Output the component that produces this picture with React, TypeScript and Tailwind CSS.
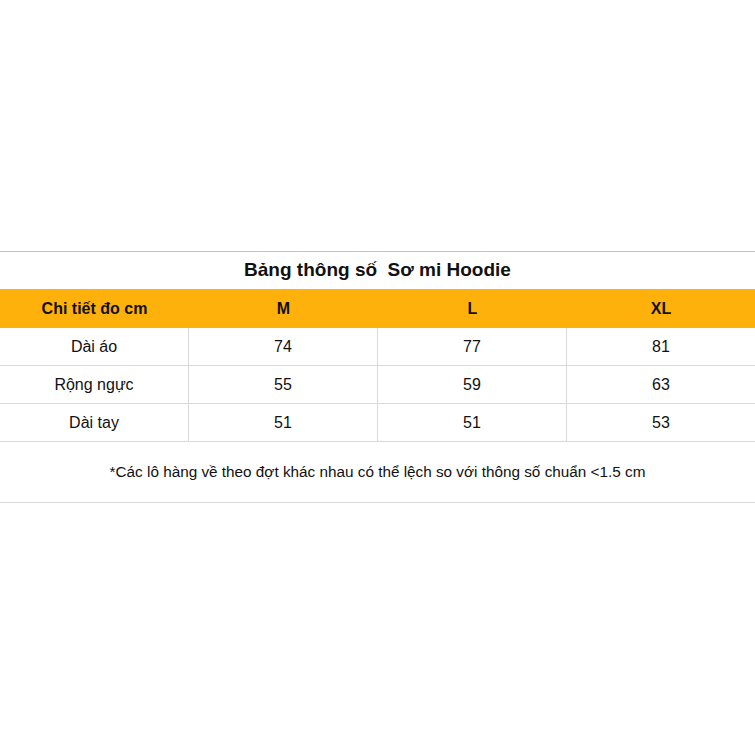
const rows = [
  { label: "Dài áo", m: "74", l: "77", xl: "81" },
  { label: "Rộng ngực", m: "55", l: "59", xl: "63" },
  { label: "Dài tay", m: "51", l: "51", xl: "53" },
];

const App: React.FC = () => {
  return (
    <div
      className="w-[755px] h-[755px] bg-white text-[#111] pt-[251px]"
      style={{ fontFamily: '"Liberation Sans", Arial, sans-serif' }}
    >
      <div className="border-t border-[#c4c4c4]">
        <div className="h-[37px] flex items-center justify-center text-[19px] font-bold whitespace-pre">
          Bảng thông số  Sơ mi Hoodie
        </div>
        <div className="grid grid-cols-[189px_189px_189px_188px] h-[39px] bg-[#feb00b] font-bold text-[16px]">
          <div className="flex items-center justify-center">Chi tiết đo cm</div>
          <div className="flex items-center justify-center">M</div>
          <div className="flex items-center justify-center">L</div>
          <div className="flex items-center justify-center">XL</div>
        </div>
        {rows.map((r) => (
          <div
            key={r.label}
            className="grid grid-cols-[189px_189px_189px_188px] h-[38px] border-b border-[#d9d9d9] text-[16px]"
          >
            <div className="flex items-center justify-center border-r border-[#d9d9d9]">{r.label}</div>
            <div className="flex items-center justify-center border-r border-[#d9d9d9]">{r.m}</div>
            <div className="flex items-center justify-center border-r border-[#d9d9d9]">{r.l}</div>
            <div className="flex items-center justify-center">{r.xl}</div>
          </div>
        ))}
        <div className="h-[61px] flex items-center justify-center border-b border-[#d9d9d9] text-[15.3px]">
          *Các lô hàng về theo đợt khác nhau có thể lệch so với thông số chuẩn &lt;1.5 cm
        </div>
      </div>
    </div>
  );
};

export default App;
